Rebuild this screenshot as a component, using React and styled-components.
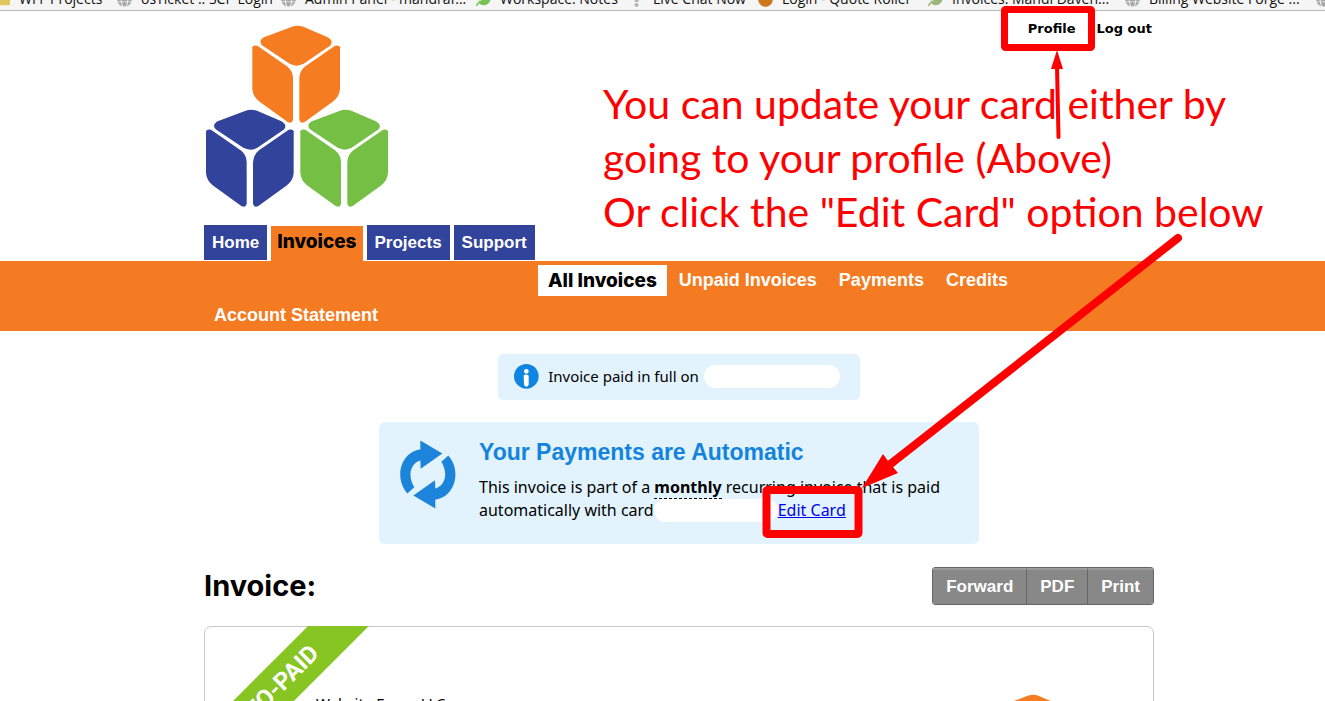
import React from 'react';
import styled, { createGlobalStyle } from 'styled-components';
import { FaGlobe, FaFolder, FaLeaf, FaQuestion, FaCircle } from 'react-icons/fa';

const bodyFont = '"Noto Sans", sans-serif';
const linkFont = '"DejaVu Sans", sans-serif';
const navFont = '"Liberation Sans", Arial, sans-serif';
const titleFont = 'Inter, sans-serif';

const GlobalStyle = createGlobalStyle`
  * {
    box-sizing: border-box;
  }

  body {
    margin: 0;
    background: #fff;
    color: #000;
    font-family: ${bodyFont};
    font-size: 15px;
    line-height: 23px;
  }
`;

const Page = styled.div`
  position: relative;
  height: 100vh;
  overflow: hidden;
`;

const Container = styled.div`
  box-sizing: content-box;
  max-width: 950px;
  margin: 0 auto;
  padding-left: 33px;
`;

const BookmarkBar = styled.div`
  display: flex;
  align-items: flex-end;
  height: 11px;
  overflow: hidden;
  background: #f5f5f5;
  border-bottom: 1px solid #b9b9b9;

  a:first-child {
    margin-left: -5px;
  }
`;

const Bookmark = styled.a`
  display: flex;
  flex: 0 0 ${({ $width }) => $width}px;
  align-items: center;
  gap: 9px;
  padding-bottom: 3px;
  font: 14px/16px "Open Sans", sans-serif;
  white-space: nowrap;
  color: #111;
  text-decoration: none;

  svg {
    flex: none;
    color: ${({ $color }) => $color};
  }
`;

const Header = styled.header`
  display: flex;
  justify-content: space-between;
  align-items: flex-start;
  padding-top: 9px;
`;

const LogoLink = styled.a`
  display: block;
  padding: 5px 0 0 2px;

  svg {
    display: block;
  }
`;

const UserLinks = styled.div`
  display: flex;
  gap: 21px;
  padding-right: 2px;
`;

const UserLink = styled.a`
  font: bold 13px/18px ${linkFont};
  color: #000;
  text-decoration: none;
`;

const Tabs = styled.nav`
  display: flex;
  align-items: flex-start;
  gap: 4px;
  height: 36px;
  margin-top: 17px;
`;

const Tab = styled.a`
  height: 35px;
  margin-top: ${({ $active }) => ($active ? 1 : 0)}px;
  padding: 0 ${({ $active }) => ($active ? 6 : 8)}px;
  background: ${({ $active }) => ($active ? '#f57b22' : '#32439b')};
  color: ${({ $active }) => ($active ? '#000' : '#fff')};
  font-family: ${({ $active }) => ($active ? titleFont : navFont)};
  font-size: ${({ $active }) => ($active ? 19 : 17)}px;
  font-weight: ${({ $active }) => ($active ? 800 : 700)};
  line-height: ${({ $active }) => ($active ? 31 : 35)}px;
  text-decoration: none;
`;

const SubNavBar = styled.div`
  background: #f57b22;
`;

const SubNav = styled.nav`
  display: flex;
  flex-wrap: wrap;
  gap: 4px 2px;
  padding: 4px 0 0;
  min-height: 70px;
  align-content: flex-start;

  a:first-child {
    margin-left: 334px;
  }
`;

const SubLink = styled.a`
  padding: 0 10px;
  background: ${({ $active }) => ($active ? '#fff' : 'transparent')};
  color: ${({ $active }) => ($active ? '#000' : '#fff')};
  font-family: ${({ $active }) => ($active ? titleFont : navFont)};
  font-size: ${({ $active }) => ($active ? 19 : 18)}px;
  font-weight: ${({ $active }) => ($active ? 800 : 700)};
  line-height: 31px;
  text-decoration: none;
`;

const PaidNotice = styled.div`
  display: flex;
  align-items: center;
  gap: 9px;
  width: fit-content;
  height: 46px;
  margin: 23px auto 0;
  padding: 0 20px 2px 16px;
  border-radius: 5px;
  background: #e2f3fe;
`;

const Blank = styled.span`
  display: inline-block;
  width: ${({ $width }) => $width}px;
  height: 23px;
  border-radius: 12px;
  background: #fff;
  vertical-align: bottom;
`;

const PaidText = styled.span`
  display: flex;
  gap: 5px;
`;

const AutoNotice = styled.section`
  display: flex;
  gap: 23px;
  max-width: 600px;
  margin: 22px auto 0;
  padding: 18px 21px 22px;
  border-radius: 6px;
  background: #e2f3fe;

  svg {
    flex: none;
  }
`;

const AutoTitle = styled.h2`
  margin: 0 0 12px;
  color: #1383de;
  font: bold 23px/24px ${navFont};
`;

const AutoText = styled.p`
  margin: 0;
  font-size: 16px;

  b {
    border-bottom: 1px dashed #000;
  }

  a {
    color: #00e;
  }
`;

const TitleRow = styled.div`
  display: flex;
  justify-content: space-between;
  align-items: center;
  margin-top: 23px;
`;

const Title = styled.h1`
  margin: 0;
  font: 700 29px/38px ${titleFont};
`;

const ButtonGroup = styled.div`
  display: flex;
  border: 1px solid #666;
  border-radius: 3px;
  overflow: hidden;
`;

const ActionButton = styled.button`
  height: 36px;
  padding: 0 13px;
  border: 0;
  border-top: 2px solid #9b9b9b;
  background: #888;
  color: #fff;
  font: bold 17px/34px ${navFont};
  cursor: pointer;

  & + & {
    border-left: 1px solid #666;
  }
`;

const InvoiceCard = styled.main`
  position: relative;
  display: flex;
  justify-content: space-between;
  align-items: flex-start;
  margin-top: 21px;
  padding: 67px 45px 60px 111px;
  border: 1px solid #c8c8c8;
  border-radius: 7px;
`;

const Company = styled.span`
  line-height: 18px;
`;

const RibbonClip = styled.div`
  position: absolute;
  top: -1px;
  left: 0;
  width: 180px;
  height: 180px;
  overflow: hidden;
`;

const Ribbon = styled.div`
  position: absolute;
  top: 46px;
  left: -54px;
  width: 240px;
  background: #86c522;
  color: #fff;
  font: bold 24px/43px Roboto, sans-serif;
  text-align: center;
  transform: rotate(-45deg);
`;

const Overlay = styled.svg`
  position: absolute;
  top: 0;
  left: 0;
  pointer-events: none;
`;

const Note = styled.p`
  position: absolute;
  top: 77px;
  left: 603px;
  margin: 0;
  color: #f00;
  font: 41px/54px Lato, sans-serif;
  white-space: nowrap;
`;

const bookmarks = [
  { label: 'WFF Projects', width: 122, icon: FaFolder, color: '#e2c75c' },
  { label: 'osTicket :: SCP Login', width: 164, icon: FaGlobe, color: '#a5a5a5' },
  { label: 'Admin Panel - mandraf...', width: 195, icon: FaGlobe, color: '#a5a5a5' },
  { label: 'Workspace: Notes', width: 153, icon: FaLeaf, color: '#76c353' },
  { label: 'Live Chat Now', width: 129, icon: FaQuestion, color: '#b5b5b5' },
  { label: 'Login - Quote Roller', width: 170, icon: FaCircle, color: '#cc771c' },
  { label: 'Invoices: Mandi Daven...', width: 197, icon: FaLeaf, color: '#9cb779' },
  { label: 'Billing Website Forge ...', width: 191, icon: FaGlobe, color: '#a5a5a5' },
  { label: '', width: 20, icon: FaGlobe, color: '#a5a5a5' },
];

const subLinks = ['All Invoices', 'Unpaid Invoices', 'Payments', 'Credits', 'Account Statement'];

const Cube = ({ color, x = 0, y = 0 }) => (
  <g fill={color} transform={`translate(${x} ${y})`}>
    <path d="M306 34Q322 28 340 34L415 66Q432 78 421 90L341 145Q320 156 299 145L217 90Q204 78 220 66Z" />
    <path d="M187 95Q190 87 202 91L292 153Q308 166 309 188L309 312Q307 325 294 320L208 258Q188 243 187 220Z" />
    <path d="M450 95Q447 87 435 91L345 153Q329 166 328 188L328 312Q330 325 343 320L429 258Q449 243 450 220Z" />
  </g>
);

const Logo = ({ size }) => (
  <svg width={size} height={size} viewBox="48 30 549 546" role="img" aria-label="Website Forge">
    <Cube color="#f67c22" />
    <Cube color="#32439b" x={-139} y={252} />
    <Cube color="#75bf44" x={144} y={252} />
  </svg>
);

const InfoIcon = () => (
  <svg width="25" height="25" viewBox="0 0 75 75" aria-hidden="true">
    <circle cx="37" cy="37" r="37" fill="#0f84e0" />
    <circle cx="37" cy="22" r="7" fill="#fff" />
    <path d="M29 34Q37 29 44 35V61Q43 68 37 68T30 61Z" fill="#fff" />
  </svg>
);

const arrowPath = 'M61 1L127 40L62 86L61 61C34 68 20 104 43 141L22 160C-20 112 4 34 61 28Z';

const SyncIcon = () => (
  <svg width="56" height="69" viewBox="0 0 168 206" fill="#1d84dc" aria-hidden="true">
    <path d={arrowPath} />
    <path d={arrowPath} transform="rotate(180 83.5 103)" />
  </svg>
);

const App = () => {
  return (
    <Page>
      <GlobalStyle />
      <BookmarkBar>
        {bookmarks.map(({ label, width, icon: Icon, color }) => (
          <Bookmark key={label} href="#" $width={width} $color={color}>
            <Icon size={15} />
            {label}
          </Bookmark>
        ))}
      </BookmarkBar>

      <Container>
        <Header>
          <LogoLink href="#">
            <Logo size={183} />
          </LogoLink>
          <UserLinks>
            <UserLink href="#">Profile</UserLink>
            <UserLink href="#">Log out</UserLink>
          </UserLinks>
        </Header>
        <Tabs>
          <Tab href="#">Home</Tab>
          <Tab href="#" $active>Invoices</Tab>
          <Tab href="#">Projects</Tab>
          <Tab href="#">Support</Tab>
        </Tabs>
      </Container>

      <SubNavBar>
        <Container>
          <SubNav>
            {subLinks.map((label, index) => (
              <SubLink key={label} href="#" $active={index === 0}>
                {label}
              </SubLink>
            ))}
          </SubNav>
        </Container>
      </SubNavBar>

      <Container>
        <PaidNotice>
          <InfoIcon />
          <PaidText>
            Invoice paid in full on
            <Blank $width={136} />
          </PaidText>
        </PaidNotice>

        <AutoNotice>
          <SyncIcon />
          <div>
            <AutoTitle>Your Payments are Automatic</AutoTitle>
            <AutoText>
              This invoice is part of a <b>monthly</b> recurring invoice that is paid
              <br />
              automatically with card
              <Blank $width={124} />
              <a href="#">Edit Card</a>
            </AutoText>
          </div>
        </AutoNotice>

        <TitleRow>
          <Title>Invoice:</Title>
          <ButtonGroup>
            <ActionButton type="button">Forward</ActionButton>
            <ActionButton type="button">PDF</ActionButton>
            <ActionButton type="button">Print</ActionButton>
          </ButtonGroup>
        </TitleRow>

        <InvoiceCard>
          <RibbonClip>
            <Ribbon>AUTO-PAID</Ribbon>
          </RibbonClip>
          <Company>Website Forge LLC</Company>
          <Logo size={150} />
        </InvoiceCard>
      </Container>

      {/* Red mark-up on top of the page */}
      <Note>
        You can update your card either by
        <br />
        going to your profile (Above)
        <br />
        Or click the "Edit Card" option below
      </Note>
      <Overlay width="1325" height="701" fill="none" stroke="#f00" aria-hidden="true">
        <rect x="1004.5" y="9.5" width="87" height="38" rx="1" strokeWidth="7" strokeLinejoin="round" />
        <rect x="766.5" y="490" width="92" height="44" rx="1" strokeWidth="8" strokeLinejoin="round" />
        <path d="M1058.500 137L1057 66" strokeWidth="4" strokeLinecap="round" />
        <path d="M1057 50L1063 69H1051Z" fill="#f00" stroke="none" />
        <path d="M1178 238L888 466" strokeWidth="8" strokeLinecap="round" />
        <path d="M862 488L883 454L888 461L893 467L898 473Z" fill="#f00" stroke="none" />
      </Overlay>
    </Page>
  );
};

export default App;
